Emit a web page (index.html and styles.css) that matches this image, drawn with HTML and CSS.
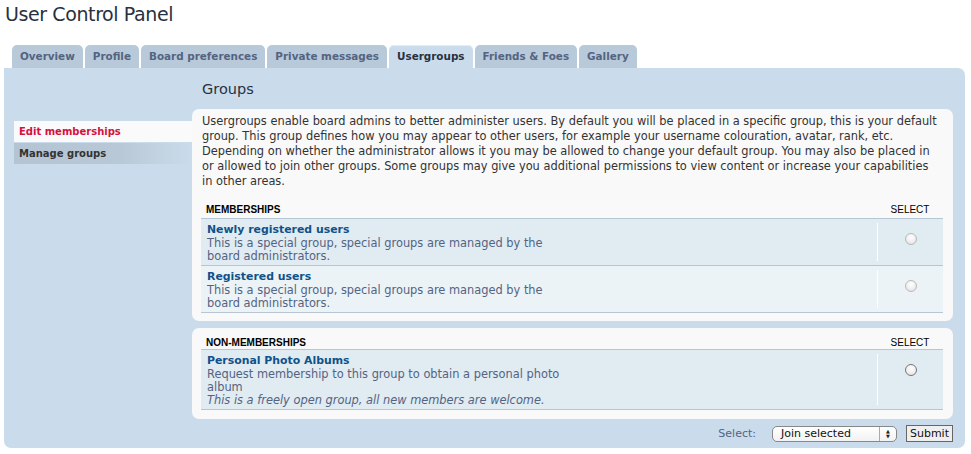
FILE: index.html
```html
<!DOCTYPE html>
<html>
<head>
<meta charset="utf-8">
<title>User Control Panel</title>
<link rel="stylesheet" href="styles.css">
</head>
<body>
<h1 class="title">User Control Panel</h1>
<ul class="tabs">
  <li class="tab">Overview</li>
  <li class="tab">Profile</li>
  <li class="tab">Board preferences</li>
  <li class="tab">Private messages</li>
  <li class="tab active">Usergroups</li>
  <li class="tab">Friends &amp; Foes</li>
  <li class="tab">Gallery</li>
</ul>
<div class="panel">
  <ul class="side">
    <li class="side-item current">Edit memberships</li>
    <li class="side-item">Manage groups</li>
  </ul>
  <div class="main">
    <h2 class="heading">Groups</h2>
    <div class="box">
      <p class="intro">Usergroups enable board admins to better administer users. By default you will be placed in a specific group, this is your default group. This group defines how you may appear to other users, for example your username colouration, avatar, rank, etc. Depending on whether the administrator allows it you may be allowed to change your default group. You may also be placed in or allowed to join other groups. Some groups may give you additional permissions to view content or increase your capabilities in other areas.</p>
      <div class="list-head"><span class="lh-title">Memberships</span><span class="sel-col">Select</span></div>
      <div class="row bg1">
        <div class="info">
          <div class="gname">Newly registered users</div>
          <div class="gdesc">This is a special group, special groups are managed by the board administrators.</div>
        </div>
        <div class="radio-col"><span class="radio"></span></div>
      </div>
      <div class="row bg2">
        <div class="info">
          <div class="gname">Registered users</div>
          <div class="gdesc">This is a special group, special groups are managed by the board administrators.</div>
        </div>
        <div class="radio-col"><span class="radio"></span></div>
      </div>
    </div>
    <div class="box box2">
      <div class="list-head"><span class="lh-title">Non-memberships</span><span class="sel-col">Select</span></div>
      <div class="row bg1">
        <div class="info">
          <div class="gname">Personal Photo Albums</div>
          <div class="gdesc">Request membership to this group to obtain a personal photo album</div>
          <div class="gdesc note">This is a freely open group, all new members are welcome.</div>
        </div>
        <div class="radio-col"><span class="radio dark"></span></div>
      </div>
    </div>
    <div class="actions">
      <span class="sel-label">Select:</span>
      <span class="select">Join selected<span class="arrows">&#9650;<br>&#9660;</span></span>
      <span class="submit">Submit</span>
    </div>
  </div>
</div>
</body>
</html>
```
FILE: styles.css
```css
* { box-sizing: border-box; }
body {
  margin: 0;
  background: #fff;
  font-family: "DejaVu Sans", Verdana, sans-serif;
  color: #333;
  width: 971px;
  height: 454px;
  overflow: hidden;
}
.title {
  margin: 0;
  padding: 3px 0 0 5px;
  height: 45px;
  font-family: "DejaVu Sans", sans-serif;
  font-weight: normal;
  font-size: 19px;
  letter-spacing: -0.4px;
  color: #28313f;
}
.tabs {
  list-style: none;
  margin: 0 0 0 12px;
  padding: 0;
  display: flex;
  gap: 2px;
  height: 23px;
}
.tab {
  height: 23px;
  padding: 0 8px;
  background: #b8c9d9;
  border-radius: 5px 5px 0 0;
  font-size: 10.4px;
  font-weight: bold;
  color: #536482;
  line-height: 23px;
}
.tab.active {
  background: #cadceb;
  color: #28313f;
  box-shadow: inset 0 1px 0 #e6eef5;
}
.panel {
  margin: 0 6px 0 4px;
  height: 380px;
  background: #cadceb;
  border-radius: 0 7px 7px 7px;
  display: flex;
  padding: 0 12px 0 10px;
}
.side {
  list-style: none;
  margin: 53px 0 0 0;
  padding: 0;
  width: 178px;
  flex: none;
}
.side-item {
  height: 21px;
  line-height: 21px;
  padding-left: 5px;
  font-size: 10px;
  font-weight: bold;
  color: #333;
  margin-bottom: 1px;
  background: linear-gradient(to right, #b4c4d2 0%, #b8c8d6 60%, #cadceb 100%);
}
.side-item.current {
  background: #fafafa;
  color: #d31141;
}
.main {
  flex: 1;
  display: flex;
  flex-direction: column;
}
.heading {
  margin: 0;
  padding: 13px 0 0 10px;
  height: 41px;
  font-family: "DejaVu Sans", sans-serif;
  font-weight: normal;
  font-size: 14.5px;
  color: #28313f;
}
.box {
  background: #f9f9f9;
  border-radius: 7px;
  padding: 5px 10px 8px 9px;
}
.box2 {
  margin-top: 7px;
  padding-top: 3px;
  padding-bottom: 9px;
}
.intro {
  margin: 0 3px 0 1px;
  font-size: 11.4px;
  line-height: 15px;
  color: #333;
}
.list-head {
  display: flex;
  justify-content: space-between;
  font-family: "Liberation Sans", Arial, sans-serif;
  font-size: 10px;
  text-transform: uppercase;
  height: 30px;
  padding: 15px 0 0 5px;
  border-bottom: 1px solid #b7c6d4;
  color: #000;
}
.lh-title { font-weight: bold; }
.box2 .list-head { height: 19px; padding-top: 6px; }
.sel-col {
  width: 66px;
  text-align: center;
}
.row {
  display: flex;
  border-bottom: 1px solid #b7c6d4;
}
.bg1 { background: #e1ebf2; }
.bg2 { background: #ecf3f7; }
.info {
  flex: 1;
  padding: 3px 0 2px 6px;
}
.gname {
  font-size: 10.9px;
  font-weight: bold;
  color: #105289;
  line-height: 15px;
}
.gdesc {
  font-size: 11.4px;
  line-height: 13px;
  color: #536482;
  max-width: 362px;
}
.note { font-style: italic; max-width: none; }
.radio-col {
  width: 66px;
  flex: none;
  display: flex;
  justify-content: center;
  padding-top: 10px;
  margin: 4px 0;
  border-left: 1px solid #fff;
}
.radio {
  width: 12px;
  height: 12px;
  border-radius: 50%;
  border: 1px solid #b9b9b9;
  background: radial-gradient(circle at 50% 35%, #fff 0%, #f0f0f0 50%, #dcdcdc 100%);
  display: block;
}
.radio.dark { border-color: #777; }
.actions {
  display: flex;
  justify-content: flex-end;
  align-items: center;
  padding-top: 6px;
  font-size: 11px;
}
.sel-label {
  color: #536482;
  margin-right: 16px;
}
.select {
  position: relative;
  width: 125px;
  height: 16px;
  border: 1px solid #888;
  border-radius: 5px;
  background: linear-gradient(#fff, #f2f2f2);
  font-size: 11px;
  line-height: 14px;
  padding-left: 8px;
  color: #111;
  margin-right: 9px;
}
.arrows {
  position: absolute;
  right: 0;
  top: 0;
  width: 17px;
  height: 14px;
  border-left: 1px solid #aaa;
  font-size: 5px;
  line-height: 5px;
  text-align: center;
  padding-top: 2px;
  color: #222;
}
.submit {
  height: 17px;
  border: 1px solid #666;
  background: #efefef;
  font-size: 11px;
  line-height: 15px;
  padding: 0 3px;
  color: #111;
}
```
